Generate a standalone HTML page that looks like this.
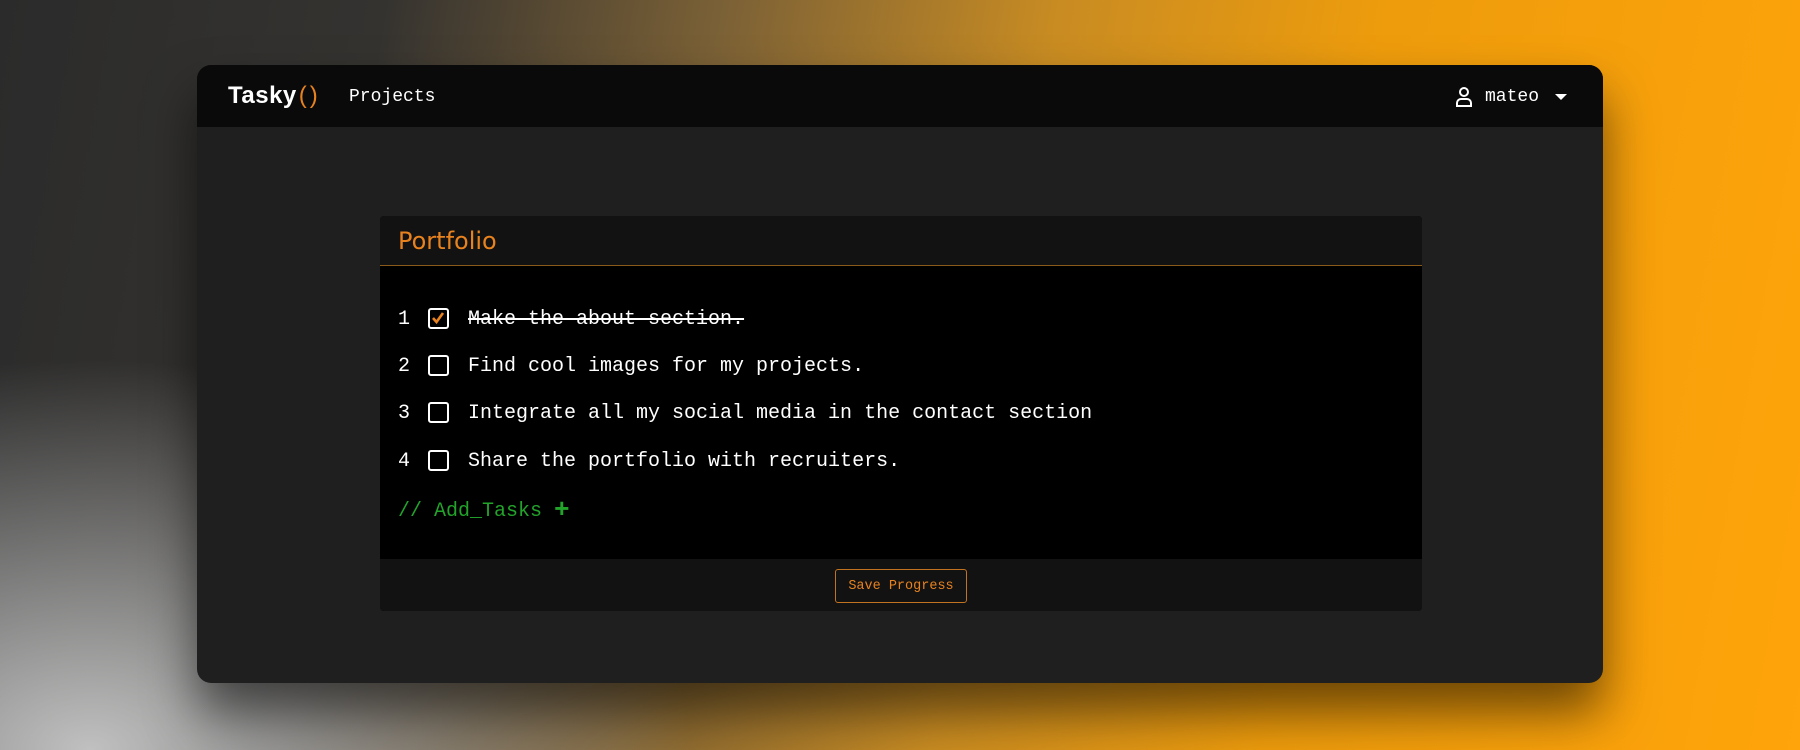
<!DOCTYPE html>
<html><head><style>
*{margin:0;padding:0;box-sizing:border-box}
body{width:1800px;height:750px;overflow:hidden;position:relative;
background:
radial-gradient(ellipse 800px 520px at 5% 100%, rgba(200,200,200,0.95), rgba(200,200,200,0) 75%),
linear-gradient(100deg,#2b2b2b 0%,#353330 20%,#7d6236 38%,#c98c22 55%,#ee9c0c 72%,#ffa40a 100%);
font-family:"Liberation Mono",monospace;}
.win{position:absolute;left:197px;top:65px;width:1406px;height:618px;background:#1f1f1f;border-radius:14px;overflow:hidden;box-shadow:0 30px 50px rgba(0,0,0,0.55)}
.nav{height:62px;background:#0b0a0a;position:relative}
.logo{position:absolute;left:31px;top:17px;font-family:"Liberation Sans",sans-serif;font-weight:bold;font-size:24px;color:#fff;letter-spacing:0.5px}
.logo span{color:#e8821e;font-weight:normal;letter-spacing:3px;margin-left:2px}
.proj{position:absolute;left:152px;top:22px;font-size:18px;color:#fff}
.user{position:absolute;left:1261px;top:22px;font-size:18px;color:#fff}
.card{position:absolute;left:183px;top:151px;width:1042px;height:395px;border-radius:4px;overflow:hidden;background:#000}
.hd{height:50px;background:#121212;border-bottom:1px solid #8a5a1a;position:relative}
.hd div{position:absolute;left:18px;top:11px;font-family:"DejaVu Sans",sans-serif;font-size:24px;color:#e8821e}
.row{position:absolute;left:18px;font-size:20px;color:#fff;height:24px;line-height:24px}
.row .n{position:absolute;left:0;top:2px}
.row .b{position:absolute;left:30px;top:2px;width:21px;height:21px;border:2.5px solid #fff;border-radius:3px}
.row .t{position:absolute;left:70px;top:2px;white-space:nowrap}
.ft{position:absolute;left:0;top:343px;width:100%;height:52px;background:#121212}
.btn{position:absolute;left:455px;top:10px;width:132px;height:34px;border:1px solid #c27320;border-radius:3px;color:#e8821e;font-size:13.5px;text-align:center;line-height:34px}
</style></head><body>
<div class="win">
 <div class="nav">
  <div class="logo">Tasky<span>()</span></div>
  <div class="proj">Projects</div>
  <div class="user"><svg width="20" height="22" viewBox="0 0 20 22" style="position:absolute;left:-4px;top:-1px"><circle cx="10" cy="6" r="4" fill="none" stroke="#fff" stroke-width="2"/><path d="M3 20v-3a4 4 0 0 1 4-4h6a4 4 0 0 1 4 4v3z" fill="none" stroke="#fff" stroke-width="2"/></svg><span style="margin-left:27px">mateo</span><svg width="12" height="8" style="position:absolute;left:97px;top:7px"><path d="M0 0h12L6 6z" fill="#fff"/></svg></div>
 </div>
 <div class="card">
  <div class="hd"><div>Portfolio</div></div>
  <div class="row" style="top:90px"><span class="n">1</span><span class="b"><svg width="16" height="16" style="position:absolute;left:0;top:0"><path d="M3 8l3.5 4L13 3" fill="none" stroke="#e8821e" stroke-width="2.6"/></svg></span><span class="t" style="text-decoration:line-through">Make the about section.</span></div>
  <div class="row" style="top:137px"><span class="n">2</span><span class="b"></span><span class="t">Find cool images for my projects.</span></div>
  <div class="row" style="top:184px"><span class="n">3</span><span class="b"></span><span class="t">Integrate all my social media in the contact section</span></div>
  <div class="row" style="top:232px"><span class="n">4</span><span class="b"></span><span class="t">Share the portfolio with recruiters.</span></div>
  <div class="row" style="top:280px;color:#22a32a"><span class="n" style="white-space:nowrap">// Add_Tasks <b style="font-size:26px;vertical-align:-1px">+</b></span></div>
  <div class="ft"><div class="btn">Save Progress</div></div>
 </div>
</div>
</body></html>
